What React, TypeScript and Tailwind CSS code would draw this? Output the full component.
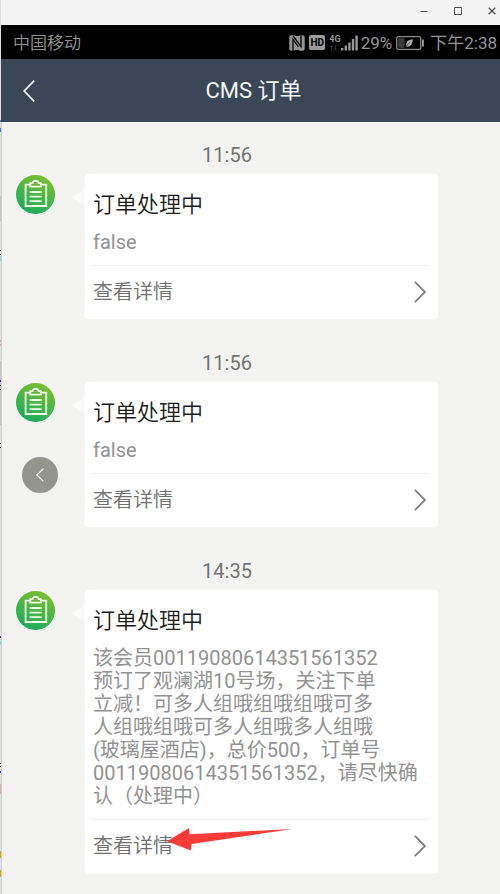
type Order = {
  id: number
  time: string
  title: string
  desc: string
}

const orders: Order[] = [
  { id: 1, time: '11:56', title: '订单处理中', desc: 'false' },
  { id: 2, time: '11:56', title: '订单处理中', desc: 'false' },
  {
    id: 3,
    time: '14:35',
    title: '订单处理中',
    desc: [
      '该会员00119080614351561352',
      '预订了观澜湖10号场，关注下单',
      '立减！可多人组哦组哦组哦可多',
      '人组哦组哦可多人组哦多人组哦',
      '(玻璃屋酒店)，总价500，订单号',
      '00119080614351561352，请尽快确',
      '认（处理中）',
    ].join('\n'),
  },
]

function WindowBar() {
  return (
    <div className="flex h-[25px] items-center justify-end gap-[26px] bg-[#f4f4f4] pr-1 pb-[3px] text-[#505050]">
      <button aria-label="minimize">
        <svg className="block size-2" viewBox="0 0 8 8" stroke="currentColor" fill="none">
          <path d="M0.5 4.5h7" />
        </svg>
      </button>
      <button aria-label="maximize">
        <svg className="block size-2" viewBox="0 0 8 8" stroke="currentColor" fill="none">
          <path d="M0.5 0.5h7v7h-7z" />
        </svg>
      </button>
      <button aria-label="close">
        <svg className="block size-2" viewBox="0 0 8 8" stroke="currentColor" fill="none">
          <path d="M0.7 0.7l6.6 6.6M7.3 0.7L0.7 7.3" strokeWidth="1.3" />
        </svg>
      </button>
    </div>
  )
}

function NfcIcon() {
  return (
    <svg className="size-4" viewBox="0 0 16 16" fill="none">
      <rect x="0.3" y="0.3" width="15.4" height="15.4" rx="2" fill="currentColor" />
      <path d="M4 16V4.400l5.400 7.200M12 0v11.600L6.600 4.400L4 0.800" stroke="#000" strokeWidth="1.300" />
      <path d="M5.600 0L10.400 0M5.600 16h4.800" stroke="#000" strokeWidth="2" />
    </svg>
  )
}

function SignalIcon() {
  return (
    <svg className="h-4 w-[17px]" viewBox="0 0 17 16" fill="currentColor">
      <path d="M0 13h2.4v2.6H0zM3.6 10.4H6v5.2H3.6zM7.2 7.4h2.4v8.2H7.2zM10.8 4h2.4v11.6h-2.4zM14.4 0.6h2.4v15h-2.4z" />
    </svg>
  )
}

function BatteryIcon() {
  return (
    <svg className="h-[14px] w-7" viewBox="0 0 28 14" fill="none">
      <rect x="0.7" y="0.7" width="24" height="12.6" rx="1.6" stroke="#8a8a8a" strokeWidth="1.3" />
      <rect x="2.2" y="2.2" width="6.4" height="9.6" fill="#3c3c3c" />
      <path d="M26 3.4h1.8v7.2H26z" fill="#a0a0a0" />
      <path d="M16.8 3.2c-4.6.8-7.2 2.6-6.4 6.4l-1.2 1.6 1.4-.6c3.8.6 5.8-2.4 6.2-7.4z" fill="#b0b0b0" />
      <path d="M9.4 11l4.8-5" stroke="#000" strokeWidth="0.6" />
    </svg>
  )
}

function StatusBar() {
  return (
    <div className="flex h-[34px] items-center bg-black pt-px pr-[3px] pl-3 text-[17px] leading-6 text-[#959595]">
      <span className="mr-auto font-[350]">中国移动</span>
      <div className="flex items-center gap-1">
        <NfcIcon />
        <span className="flex h-[15px] w-4 items-center justify-center rounded-xs bg-[#9c9c9c] text-[10px] font-bold text-black">
          HD
        </span>
        <div className="flex">
          <div className="flex flex-col">
            <span className="text-[9px] leading-2 font-bold">4G</span>
            <svg className="h-2 w-[9px]" viewBox="0 0 9 8" fill="none" stroke="#2c2c2c">
              <path d="M2.5 7.5v-5M1 4l1.5-1.6L4 4M6.5 2v5M5 5.6l1.5 1.6L8 5.6" />
            </svg>
          </div>
          <SignalIcon />
        </div>
      </div>
      <span className="mr-1 ml-[3px]">29%</span>
      <BatteryIcon />
      <span className="ml-[6px]">下午2:38</span>
    </div>
  )
}

function Header() {
  return (
    <header className="relative flex h-[63px] items-center justify-center bg-[#394756] pt-px pl-[6px] text-[#f4f6f8]">
      <button aria-label="back" className="absolute left-[22px]">
        <svg className="block h-[22px] w-3" viewBox="0 0 12 22" fill="none" stroke="currentColor" strokeWidth="1.7">
          <path d="M11.2 0.6L1.2 11l10 10.4" />
        </svg>
      </button>
      <h1 className="text-[22px] leading-7">CMS 订单</h1>
    </header>
  )
}

function OrderAvatar() {
  return (
    <svg className="mt-px size-[39px] shrink-0" viewBox="0 0 39 39" fill="none">
      <defs>
        <linearGradient id="avatar" x1="0.75" y1="0" x2="0.3" y2="1">
          <stop offset="0" stopColor="#7cc02c" />
          <stop offset="1" stopColor="#16ac60" />
        </linearGradient>
      </defs>
      <circle cx="19.5" cy="19.5" r="19.5" fill="url(#avatar)" />
      <g stroke="#f4fbe9" strokeWidth="1.8">
        <path d="M14 9.6H9.6V31h20.6V9.6h-4.8" />
        <path d="M14.2 11.6V8.2h2.4c.2-1.4 1-2.2 2.2-2.2h1.6c1.2 0 2 .8 2.2 2.2H25v3.4z" />
        <path d="M13.6 17h12M13.6 21.6h12M13.6 26.2h12" />
      </g>
    </svg>
  )
}

function OrderCard({ order, marked }: { order: Order; marked: boolean }) {
  return (
    <section>
      <p className="mb-[7px] text-center text-xl leading-6 text-[#737373]">{order.time}</p>
      <div className="flex items-start">
        <OrderAvatar />
        <svg className="mt-4 ml-4 h-4 w-[14px] shrink-0" viewBox="0 0 14 16">
          <path d="M0 7l14-7v16z" fill="#fafafa" />
        </svg>
        <div className="min-w-0 flex-1 rounded-sm bg-white pt-[17px] shadow-[0_0_3px_rgba(255,255,255,0.9)]">
          <h2 className="px-2 text-[22px] leading-7 font-[350] text-[#1c1c1c]">{order.title}</h2>
          <p className="mt-3 px-2 text-xl leading-[23px] whitespace-pre-line text-[#929292]">{order.desc}</p>
          <a
            href="#"
            className="relative mr-[9px] ml-[6px] mt-[11px] flex h-[54px] items-center justify-between border-t border-[#f0f0f0] pr-[3px] pb-[2px] pl-[2px] text-xl text-[#707070]"
          >
            <span className="font-[350]">查看详情</span>
            <svg className="h-[22px] w-3" viewBox="0 0 12 22" fill="none" stroke="#808080" strokeWidth="1.8">
              <path d="M0.8 0.8L11 11 0.8 21.2" />
            </svg>
            {marked && (
              <svg className="absolute top-[7px] left-[76px] h-6 w-[126px]" viewBox="0 0 126 24" fill="#fb3b38">
                <path d="M0 14.2L22 1l.8 6.2L125.5 2 24.6 17l-.8 6.6z" />
              </svg>
            )}
          </a>
        </div>
      </div>
    </section>
  )
}

// slivers of the window behind, seen along the left edge
function BackgroundEdge() {
  return (
    <svg className="absolute inset-y-0 left-0 h-[894px] w-px" viewBox="0 0 1 894" preserveAspectRatio="none">
      <path fill="#e0e0e2" d="M0 0h1v894H0z" />
      <path fill="#3b78f0" d="M0 120h1v2H0zM0 128h1v4H0z" />
      <path fill="#c6c6c6" d="M0 196h1v25H0zM0 361h1v64H0z" />
      <path fill="#111111" d="M0 250h1v1H0zM0 254h1v1H0zM0 385h1v1H0zM0 389h1v1H0zM0 443h1v1H0zM0 447h1v1H0zM0 763h1v1H0zM0 766h1v1H0z" />
      <path fill="#7fe0e4" d="M0 256h1v5H0zM0 641h1v4H0z" />
      <path fill="#1c35b8" d="M0 380h1v2H0zM0 636h1v2H0zM0 771h1v2H0z" />
      <path fill="#dcae93" d="M0 340h1v2H0zM0 344h1v2H0zM0 784h1v10H0z" />
      <path fill="#f5a000" d="M0 851h1v7H0zM0 870h1v7H0z" />
    </svg>
  )
}

export default function App() {
  return (
    <div className="relative flex min-h-screen flex-col bg-[#f3f3f1] pl-px font-['Roboto','Noto_Sans_CJK_SC',sans-serif]">
      <BackgroundEdge />
      <WindowBar />
      <StatusBar />
      <Header />
      <main className="relative flex flex-1 flex-col gap-8 border-l border-[#cfcfd2] pt-[21px] pr-[62px] pb-5 pl-[14px]">
        {orders.map((order) => (
          <OrderCard key={order.id} order={order} marked={order.id === 3} />
        ))}
        <button
          aria-label="collapse"
          className="absolute top-[335px] left-5 flex size-9 items-center justify-center rounded-full bg-[#94948f] text-white"
        >
          <svg className="h-[14px] w-2" viewBox="0 0 8 14" fill="none" stroke="currentColor" strokeWidth="1.2">
            <path d="M7.4 0.6L0.8 7l6.6 6.4" />
          </svg>
        </button>
      </main>
    </div>
  )
}
